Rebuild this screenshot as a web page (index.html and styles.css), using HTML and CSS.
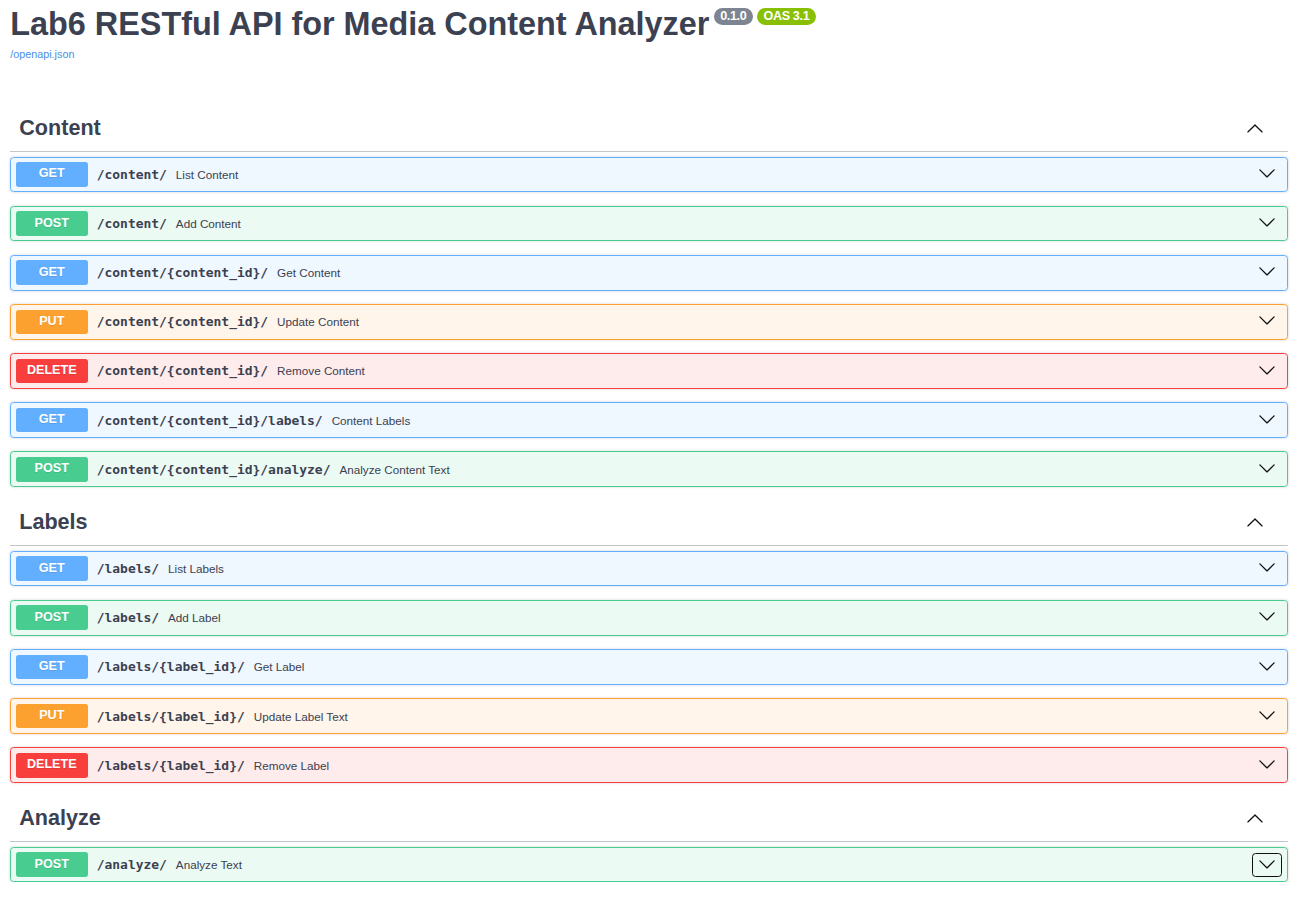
FILE: index.html
```html
<!DOCTYPE html>
<html lang="en">
<head>
<meta charset="utf-8">
<title>Lab6 RESTful API for Media Content Analyzer - Swagger UI</title>
<link rel="stylesheet" href="styles.css">
</head>
<body>
<div class="swagger-ui">
  <div class="wrapper">
    <div class="info">
      <h2 class="title">Lab6 RESTful API for Media Content Analyzer<span class="badge">0.1.0</span><span class="badge oas">OAS 3.1</span></h2>
      <a class="url" href="#">/openapi.json</a>
    </div>

    <section class="tag-section">
      <h3 class="tag"><span class="tag-name">Content</span><button class="expand"><svg viewBox="0 0 20 20" width="20" height="20"><path d="M17.418 14.908c.272.268.709.268.979 0s.271-.701 0-.969l-7.908-7.83c-.27-.268-.707-.268-.979 0l-7.908 7.83c-.27.268-.27.701 0 .969.271.268.709.268.979 0L10 7.767l7.418 7.141z"/></svg></button></h3>
      <div class="opblock get"><div class="summary"><span class="method">GET</span><span class="path">/content/</span><span class="desc">List Content</span><button class="control"><svg viewBox="0 0 20 20" width="20" height="20"><path d="M17.418 6.109c.272-.268.709-.268.979 0s.271.701 0 .969l-7.908 7.83c-.27.268-.707.268-.979 0l-7.908-7.83c-.27-.268-.27-.701 0-.969.271-.268.709-.268.979 0L10 13.25l7.418-7.141z"/></svg></button></div></div>
      <div class="opblock post"><div class="summary"><span class="method">POST</span><span class="path">/content/</span><span class="desc">Add Content</span><button class="control"><svg viewBox="0 0 20 20" width="20" height="20"><path d="M17.418 6.109c.272-.268.709-.268.979 0s.271.701 0 .969l-7.908 7.83c-.27.268-.707.268-.979 0l-7.908-7.83c-.27-.268-.27-.701 0-.969.271-.268.709-.268.979 0L10 13.25l7.418-7.141z"/></svg></button></div></div>
      <div class="opblock get"><div class="summary"><span class="method">GET</span><span class="path">/content/{content_id}/</span><span class="desc">Get Content</span><button class="control"><svg viewBox="0 0 20 20" width="20" height="20"><path d="M17.418 6.109c.272-.268.709-.268.979 0s.271.701 0 .969l-7.908 7.83c-.27.268-.707.268-.979 0l-7.908-7.83c-.27-.268-.27-.701 0-.969.271-.268.709-.268.979 0L10 13.25l7.418-7.141z"/></svg></button></div></div>
      <div class="opblock put"><div class="summary"><span class="method">PUT</span><span class="path">/content/{content_id}/</span><span class="desc">Update Content</span><button class="control"><svg viewBox="0 0 20 20" width="20" height="20"><path d="M17.418 6.109c.272-.268.709-.268.979 0s.271.701 0 .969l-7.908 7.83c-.27.268-.707.268-.979 0l-7.908-7.83c-.27-.268-.27-.701 0-.969.271-.268.709-.268.979 0L10 13.25l7.418-7.141z"/></svg></button></div></div>
      <div class="opblock delete"><div class="summary"><span class="method">DELETE</span><span class="path">/content/{content_id}/</span><span class="desc">Remove Content</span><button class="control"><svg viewBox="0 0 20 20" width="20" height="20"><path d="M17.418 6.109c.272-.268.709-.268.979 0s.271.701 0 .969l-7.908 7.83c-.27.268-.707.268-.979 0l-7.908-7.83c-.27-.268-.27-.701 0-.969.271-.268.709-.268.979 0L10 13.25l7.418-7.141z"/></svg></button></div></div>
      <div class="opblock get"><div class="summary"><span class="method">GET</span><span class="path">/content/{content_id}/labels/</span><span class="desc">Content Labels</span><button class="control"><svg viewBox="0 0 20 20" width="20" height="20"><path d="M17.418 6.109c.272-.268.709-.268.979 0s.271.701 0 .969l-7.908 7.83c-.27.268-.707.268-.979 0l-7.908-7.83c-.27-.268-.27-.701 0-.969.271-.268.709-.268.979 0L10 13.25l7.418-7.141z"/></svg></button></div></div>
      <div class="opblock post"><div class="summary"><span class="method">POST</span><span class="path">/content/{content_id}/analyze/</span><span class="desc">Analyze Content Text</span><button class="control"><svg viewBox="0 0 20 20" width="20" height="20"><path d="M17.418 6.109c.272-.268.709-.268.979 0s.271.701 0 .969l-7.908 7.83c-.27.268-.707.268-.979 0l-7.908-7.83c-.27-.268-.27-.701 0-.969.271-.268.709-.268.979 0L10 13.25l7.418-7.141z"/></svg></button></div></div>
    </section>

    <section class="tag-section">
      <h3 class="tag"><span class="tag-name">Labels</span><button class="expand"><svg viewBox="0 0 20 20" width="20" height="20"><path d="M17.418 14.908c.272.268.709.268.979 0s.271-.701 0-.969l-7.908-7.83c-.27-.268-.707-.268-.979 0l-7.908 7.83c-.27.268-.27.701 0 .969.271.268.709.268.979 0L10 7.767l7.418 7.141z"/></svg></button></h3>
      <div class="opblock get"><div class="summary"><span class="method">GET</span><span class="path">/labels/</span><span class="desc">List Labels</span><button class="control"><svg viewBox="0 0 20 20" width="20" height="20"><path d="M17.418 6.109c.272-.268.709-.268.979 0s.271.701 0 .969l-7.908 7.83c-.27.268-.707.268-.979 0l-7.908-7.83c-.27-.268-.27-.701 0-.969.271-.268.709-.268.979 0L10 13.25l7.418-7.141z"/></svg></button></div></div>
      <div class="opblock post"><div class="summary"><span class="method">POST</span><span class="path">/labels/</span><span class="desc">Add Label</span><button class="control"><svg viewBox="0 0 20 20" width="20" height="20"><path d="M17.418 6.109c.272-.268.709-.268.979 0s.271.701 0 .969l-7.908 7.83c-.27.268-.707.268-.979 0l-7.908-7.83c-.27-.268-.27-.701 0-.969.271-.268.709-.268.979 0L10 13.25l7.418-7.141z"/></svg></button></div></div>
      <div class="opblock get"><div class="summary"><span class="method">GET</span><span class="path">/labels/{label_id}/</span><span class="desc">Get Label</span><button class="control"><svg viewBox="0 0 20 20" width="20" height="20"><path d="M17.418 6.109c.272-.268.709-.268.979 0s.271.701 0 .969l-7.908 7.83c-.27.268-.707.268-.979 0l-7.908-7.83c-.27-.268-.27-.701 0-.969.271-.268.709-.268.979 0L10 13.25l7.418-7.141z"/></svg></button></div></div>
      <div class="opblock put"><div class="summary"><span class="method">PUT</span><span class="path">/labels/{label_id}/</span><span class="desc">Update Label Text</span><button class="control"><svg viewBox="0 0 20 20" width="20" height="20"><path d="M17.418 6.109c.272-.268.709-.268.979 0s.271.701 0 .969l-7.908 7.83c-.27.268-.707.268-.979 0l-7.908-7.83c-.27-.268-.27-.701 0-.969.271-.268.709-.268.979 0L10 13.25l7.418-7.141z"/></svg></button></div></div>
      <div class="opblock delete"><div class="summary"><span class="method">DELETE</span><span class="path">/labels/{label_id}/</span><span class="desc">Remove Label</span><button class="control"><svg viewBox="0 0 20 20" width="20" height="20"><path d="M17.418 6.109c.272-.268.709-.268.979 0s.271.701 0 .969l-7.908 7.83c-.27.268-.707.268-.979 0l-7.908-7.83c-.27-.268-.27-.701 0-.969.271-.268.709-.268.979 0L10 13.25l7.418-7.141z"/></svg></button></div></div>
    </section>

    <section class="tag-section">
      <h3 class="tag"><span class="tag-name">Analyze</span><button class="expand"><svg viewBox="0 0 20 20" width="20" height="20"><path d="M17.418 14.908c.272.268.709.268.979 0s.271-.701 0-.969l-7.908-7.83c-.27-.268-.707-.268-.979 0l-7.908 7.83c-.27.268-.27.701 0 .969.271.268.709.268.979 0L10 7.767l7.418 7.141z"/></svg></button></h3>
      <div class="opblock post"><div class="summary"><span class="method">POST</span><span class="path">/analyze/</span><span class="desc">Analyze Text</span><button class="control focused"><svg viewBox="0 0 20 20" width="20" height="20"><path d="M17.418 6.109c.272-.268.709-.268.979 0s.271.701 0 .969l-7.908 7.83c-.27.268-.707.268-.979 0l-7.908-7.83c-.27-.268-.27-.701 0-.969.271-.268.709-.268.979 0L10 13.25l7.418-7.141z"/></svg></button></div></div>
    </section>
  </div>
</div>
</body>
</html>
```

FILE: styles.css
```css
html, body {
  margin: 0;
  padding: 0;
  background: #fff;
}

.swagger-ui {
  zoom: 0.9;
  font-family: "Liberation Sans", Arial, sans-serif;
  color: #3b4151;
}

.wrapper {
  padding: 0 19px 0 11.4px;
}

/* ---------- info ---------- */
.info {
  padding-top: 7px;
  margin-bottom: 51px;
}

.title {
  margin: 0;
  font-size: 36px;
  font-weight: 700;
  color: #3b4151;
  line-height: 41.4px;
}

.badge {
  display: inline-block;
  vertical-align: top;
  margin: 2px 0 0 5px;
  padding: 2px 7px;
  border-radius: 57px;
  background: #7d8492;
  color: #fff;
  font-size: 14px;
  line-height: 15px;
  font-weight: 700;
  letter-spacing: -0.4px;
}

.badge.oas {
  background: #89bf04;
}

.url {
  display: block;
  margin-top: 5px;
  font-size: 12px;
  line-height: 13.8px;
  color: #4990e2;
  text-decoration: none;
}

/* ---------- tags ---------- */
.tag-section {
  display: flex;
  flex-direction: column;
}

.tag {
  display: flex;
  align-items: center;
  margin: 0 0 5px;
  padding: 9.5px 20px 11.5px 10px;
  border-bottom: 1px solid rgba(59, 65, 81, .3);
  font-size: 24px;
  font-weight: 700;
  line-height: 28.7px;
  color: #3b4151;
}

.tag-name {
  flex: 1 1 auto;
}

.expand,
.control {
  display: flex;
  align-items: center;
  justify-content: center;
  width: 33.3px;
  height: 26.7px;
  padding: 0;
  border: none;
  background: none;
  box-sizing: border-box;
  border-radius: 4px;
}

.control {
  padding-bottom: 3px;
}

.expand svg,
.control svg {
  width: 20px;
  height: 20px;
  fill: #111;
  display: block;
}

.control.focused {
  border: 2px solid #101010;
  padding-bottom: 1px;
}

/* ---------- operation blocks ---------- */
.opblock {
  margin: 0 0 15px;
  border: 1px solid #000;
  border-radius: 4px;
  box-shadow: 0 0 3px rgba(0, 0, 0, .19);
}

.tag-section:last-child .opblock:last-child {
  margin-bottom: 0;
}

.summary {
  display: flex;
  align-items: center;
  padding: 5px;
}

.method {
  min-width: 80px;
  padding: 6px 0;
  border-radius: 3px;
  font-size: 14px;
  line-height: 15.4px;
  font-weight: 700;
  text-align: center;
  color: #fff;
  text-shadow: 0 1px 0 rgba(0, 0, 0, .1);
}

.path {
  padding: 0 10px;
  font-family: "DejaVu Sans Mono", "Liberation Mono", monospace;
  font-size: 14.4px;
  font-weight: 700;
  color: #3b4151;
  white-space: nowrap;
}

.desc {
  flex: 1 1 auto;
  font-size: 13px;
  color: #3b4151;
}

.get { background: rgba(97, 175, 254, .1); border-color: #61affe; }
.get .method { background: #61affe; }

.post { background: rgba(73, 204, 144, .1); border-color: #49cc90; }
.post .method { background: #49cc90; }

.put { background: rgba(252, 161, 48, .1); border-color: #fca130; }
.put .method { background: #fca130; }

.delete { background: rgba(249, 62, 62, .1); border-color: #f93e3e; }
.delete .method { background: #f93e3e; }
```
